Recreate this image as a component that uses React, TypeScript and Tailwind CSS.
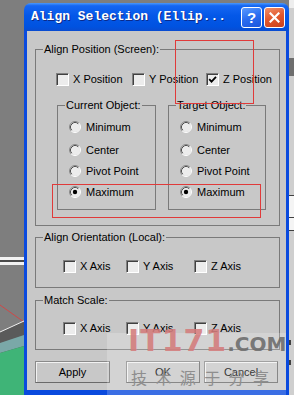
import React from "react";

function Check({ label, checked, className }: { label: string; checked?: boolean; className?: string }) {
  return (
    <div className={`flex items-center gap-[4px] h-[13px] ${className ?? ""}`}>
      <div className="w-[13px] h-[13px] shrink-0 border border-t-[#808080] border-l-[#808080] border-b-white border-r-white bg-[#ececec] shadow-[inset_1px_1px_0_#404040] flex items-center justify-center">
        {checked && (
          <svg width="9" height="9" viewBox="0 0 9 9" className="block">
            <path d="M1.2 4.2 L3.5 6.6 L8 1.8" fill="none" stroke="#000" strokeWidth="1.8" />
          </svg>
        )}
      </div>
      <span className="leading-[13px] whitespace-nowrap">{label}</span>
    </div>
  );
}

function Radio({ label, checked, className }: { label: string; checked?: boolean; className?: string }) {
  return (
    <div className={`flex items-center gap-[5px] h-[14px] ${className ?? ""}`}>
      <svg width="12" height="12" viewBox="0 0 12 12" className="block shrink-0">
        <circle cx="6" cy="6" r="5" fill="#ececec" />
        <path d="M2.11 9.89 A5.5 5.5 0 0 1 9.89 2.11" fill="none" stroke="#8a8a8a" strokeWidth="1" />
        <path d="M9.89 2.11 A5.5 5.5 0 0 1 2.11 9.89" fill="none" stroke="#ffffff" strokeWidth="1" />
        <path d="M2.82 9.18 A4.5 4.5 0 0 1 9.18 2.82" fill="none" stroke="#505050" strokeWidth="1" />
        {checked && <circle cx="6" cy="6" r="2.2" fill="#000" />}
      </svg>
      <span className="leading-[14px] whitespace-nowrap">{label}</span>
    </div>
  );
}

function Btn({ label, className }: { label: string; className?: string }) {
  return (
    <div
      className={`h-[22px] flex items-center justify-center border border-[#8a8a8a] border-b-[#6a6a6a] border-r-[#6a6a6a] shadow-[inset_1px_1px_0_#f2f2f2] bg-[#c8c8c8] ${className ?? ""}`}
    >
      <span className="leading-[13px]">{label}</span>
    </div>
  );
}

export default function App() {
  return (
    <div className="w-[294px] h-[395px] relative overflow-hidden flex bg-[#7e7e7e] font-['Liberation_Sans',Arial,sans-serif] text-[11px] text-black">
      {/* left background viewport */}
      <svg width="24" height="395" className="block shrink-0">
        <rect width="24" height="395" fill="#7e7e7e" />
        <rect y="257" width="24" height="3" fill="#f2f2f2" />
        <rect y="260" width="24" height="2" fill="#4a4a4a" />
        <rect y="262" width="24" height="3" fill="#f2f2f2" />
        <polygon points="0,332 24,321 24,395 0,395" fill="#5a5a5a" />
        <polygon points="0,343 24,335 24,346 0,353" fill="#7aa8a8" />
        <polygon points="0,353 24,346 24,395 0,395" fill="#3fb477" />
        <line x1="0" y1="305" x2="24" y2="322" stroke="#d04848" strokeWidth="1" />
        <line x1="0" y1="332" x2="24" y2="321" stroke="#f0f0f0" strokeWidth="1" />
      </svg>

      {/* dialog */}
      <div className="w-[265px] shrink-0 flex flex-col pt-[3px]">
        <div className="h-[28px] shrink-0 rounded-t-[7px] bg-[linear-gradient(180deg,#4a98fb_0%,#1566f2_10%,#0458e8_45%,#0052e0_85%,#0a4cd0_100%)] flex items-center pl-[7px] pr-[4px]">
          <span className="font-['Liberation_Mono',monospace] font-bold text-[13px] text-white leading-[16px] whitespace-nowrap [text-shadow:1px_1px_0_#0b2a8a]">
            Align Selection (Ellip...
          </span>
          <div className="ml-auto flex gap-[2px]">
            <div className="w-[21px] h-[21px] rounded-[3px] border border-white bg-[linear-gradient(160deg,#5a9bff_0%,#2a6cf0_50%,#1a55dc_100%)] flex items-center justify-center text-white font-bold text-[15px] leading-[15px] font-['Liberation_Sans',sans-serif]">
              ?
            </div>
            <div className="w-[21px] h-[21px] rounded-[3px] border border-white bg-[linear-gradient(160deg,#f0906a_0%,#e2572c_50%,#c8401c_100%)] flex items-center justify-center">
              <svg width="11" height="11" viewBox="0 0 11 11" className="block">
                <path d="M1.5 1.5 L9.5 9.5 M9.5 1.5 L1.5 9.5" stroke="#fff" strokeWidth="2.2" strokeLinecap="square" />
              </svg>
            </div>
          </div>
        </div>

        <div className="flex-1 bg-[#c8c8c8] border-l-[3px] border-r-[3px] border-b-[5px] border-[#0a4ade] pl-[8px] pr-[6px] pt-[12px] flex flex-col">
          {/* Align Position */}
          <fieldset className="border border-[#7a7a7a] h-[183px] p-0 m-0 min-w-0">
            <legend className="ml-[7px] px-[1px] leading-[13px]">Align Position (Screen):</legend>
            <div className="flex mt-[17px] pl-[20px]">
              <Check label="X Position" className="w-[76px]" />
              <Check label="Y Position" className="w-[74px]" />
              <Check label="Z Position" checked />
            </div>
            <div className="flex mt-[13px] pl-[21px] gap-[12px]">
              <fieldset className="border border-[#7a7a7a] w-[99px] h-[111px] p-0 m-0 min-w-0">
                <legend className="ml-[7px] px-[1px] leading-[13px]">Current Object:</legend>
                <div className="flex flex-col pl-[11px]">
                  <Radio label="Minimum" className="mt-[8px]" />
                  <Radio label="Center" className="mt-[9px]" />
                  <Radio label="Pivot Point" className="mt-[7px]" />
                  <Radio label="Maximum" checked className="mt-[7px]" />
                </div>
              </fieldset>
              <fieldset className="border border-[#7a7a7a] w-[98px] h-[111px] p-0 m-0 min-w-0">
                <legend className="ml-[7px] px-[1px] leading-[13px]">Target Object:</legend>
                <div className="flex flex-col pl-[11px]">
                  <Radio label="Minimum" className="mt-[8px]" />
                  <Radio label="Center" className="mt-[9px]" />
                  <Radio label="Pivot Point" className="mt-[7px]" />
                  <Radio label="Maximum" checked className="mt-[7px]" />
                </div>
              </fieldset>
            </div>
          </fieldset>

          {/* Align Orientation */}
          <fieldset className="border border-[#7a7a7a] h-[57px] mt-[5px] p-0 min-w-0">
            <legend className="ml-[7px] px-[1px] leading-[13px]">Align Orientation (Local):</legend>
            <div className="flex mt-[16px] pl-[27px]">
              <Check label="X Axis" className="w-[63px]" />
              <Check label="Y Axis" className="w-[68px]" />
              <Check label="Z Axis" />
            </div>
          </fieldset>

          {/* Match Scale */}
          <fieldset className="border border-[#7a7a7a] h-[56px] mt-[6px] p-0 min-w-0">
            <legend className="ml-[7px] px-[1px] leading-[13px]">Match Scale:</legend>
            <div className="flex mt-[15px] pl-[27px]">
              <Check label="X Axis" className="w-[63px]" />
              <Check label="Y Axis" className="w-[68px]" />
              <Check label="Z Axis" />
            </div>
          </fieldset>

          <div className="flex mt-[11px]">
            <Btn label="Apply" className="w-[75px]" />
            <Btn label="OK" className="w-[74px] ml-[16px]" />
            <Btn label="Cancel" className="w-[74px] ml-[4px]" />
          </div>
        </div>
      </div>

      {/* right edge background */}
      <svg width="5" height="395" className="block shrink-0">
        <rect width="5" height="395" fill="#cfcfcf" />
        <rect y="0" width="5" height="8" fill="#eeeeee" />
        <rect y="58" width="5" height="18" fill="#6e6e6e" />
        <rect y="195" width="5" height="1" fill="#404040" />
        <rect y="196" width="5" height="34" fill="#f4f4f4" />
        <rect y="217" width="5" height="1" fill="#404040" />
        <rect y="230" width="5" height="1" fill="#404040" />
        <rect x="0" y="340" width="2" height="5" fill="#404040" />
        <rect x="0" y="360" width="2" height="5" fill="#404040" />
      </svg>

      {/* red annotation boxes */}
      <div className="absolute left-[175px] top-[40px] w-[79px] h-[64px] border border-[#e03a3a]" />
      <div className="absolute left-[52px] top-[184px] w-[209px] h-[34px] border border-[#e03a3a]" />

      {/* watermark */}
      <div className="absolute left-[107px] top-[333px] w-[179px] h-[62px] bg-white/20" />
      <div className="absolute left-[128px] top-[326px] flex items-baseline font-['DejaVu_Sans',sans-serif] font-bold">
        <span className="text-[30px] leading-[30px] tracking-[1px] text-[#d47c7c]/90">IT171</span>
        <span className="text-[20px] leading-[20px] text-[#6c6c6c]/90">.COM</span>
      </div>
      <div className="absolute left-[131px] top-[369px] w-[138px] flex justify-between font-['Noto_Sans_CJK_SC',sans-serif] text-[16px] leading-[16px] text-[#8e8e8e]">
        <span>技</span>
        <span>术</span>
        <span>源</span>
        <span>于</span>
        <span>分</span>
        <span>享</span>
      </div>
    </div>
  );
}
